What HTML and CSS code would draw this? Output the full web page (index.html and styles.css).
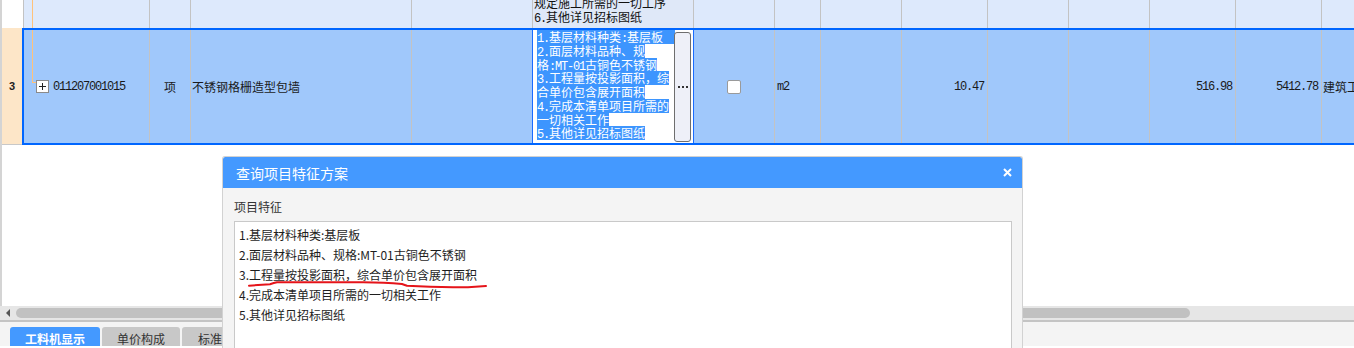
FILE: index.html
```html
<!DOCTYPE html>
<html lang="zh-CN">
<head>
<meta charset="utf-8">
<title>清单</title>
<link rel="stylesheet" href="styles.css">
</head>
<body>
<div class="grid">
  <div class="row prev">
    <div class="num"></div>
    <div class="cells">
      <div class="c c1"><span class="vline"></span></div>
      <div class="c c2"></div>
      <div class="c c3"></div>
      <div class="c c4"></div>
      <div class="c c5 feat-prev">
        <div class="pln">规定施工所需的一切工序</div>
        <div class="pln"><span class="h">6.</span>其他详见招标图纸</div>
      </div>
      <div class="c c6"></div>
      <div class="c c7"></div>
      <div class="c c8"></div>
      <div class="c c9"></div>
      <div class="c c10"></div>
      <div class="c c11"></div>
      <div class="c c12"></div>
      <div class="c c13"></div>
      <div class="c c14"></div>
    </div>
  </div>
  <div class="row cur">
    <div class="num">3</div>
    <div class="cells">
      <div class="c c1">
        <span class="elbow"></span>
        <span class="plus"><svg width="11" height="11" viewBox="0 0 11 11"><rect x="2" y="5" width="7" height="1" fill="#222"/><rect x="5" y="2" width="1" height="7" fill="#222"/></svg></span>
        <span class="mono code">011207001015</span>
      </div>
      <div class="c c2 center">项</div>
      <div class="c c3 txt">不锈钢格栅造型包墙</div>
      <div class="c c4 edit-left"></div>
      <div class="c c5 editor">
        <div class="sel">
          <div class="ln"><span><span class="h">1.</span>基层材料种类<span class="h">:</span>基层板<span class="h">  </span></span></div>
          <div class="ln"><span><span class="h">2.</span>面层材料品种、规</span></div>
          <div class="ln"><span>格<span class="h">:MT-01</span>古铜色不锈钢</span></div>
          <div class="ln"><span><span class="h">3.</span>工程量按投影面积，综</span></div>
          <div class="ln"><span>合单价包含展开面积</span></div>
          <div class="ln"><span><span class="h">4.</span>完成本清单项目所需的</span></div>
          <div class="ln"><span>一切相关工作</span></div>
          <div class="ln"><span><span class="h">5.</span>其他详见招标图纸</span></div>
        </div>
        <div class="dots"><svg width="10" height="2" viewBox="0 0 10 2"><rect x="0" y="0" width="2" height="2" fill="#333"/><rect x="4" y="0" width="2" height="2" fill="#333"/><rect x="8" y="0" width="2" height="2" fill="#333"/></svg></div>
      </div>
      <div class="c c6 center"><span class="chk"></span></div>
      <div class="c c7 left"><span class="mono">m2</span></div>
      <div class="c c8"></div>
      <div class="c c9 right"><span class="mono">10.47</span></div>
      <div class="c c10"></div>
      <div class="c c11"></div>
      <div class="c c12 right"><span class="mono">516.98</span></div>
      <div class="c c13 right"><span class="mono">5412.78</span></div>
      <div class="c c14 txt">建筑工程</div>
    </div>
  </div>
</div>
<div class="hscroll"><span class="arrow"></span><span class="thumb"></span></div>
<div class="tabs">
  <div class="tab active">工料机显示</div>
  <div class="tab">单价构成</div>
  <div class="tab">标准换算</div>
</div>

<div class="dialog">
  <div class="dtitle">
    <span>查询项目特征方案</span>
    <svg class="close" width="9" height="9" viewBox="0 0 9 9"><path d="M1 1 L8 8 M8 1 L1 8" stroke="#fff" stroke-width="2" fill="none"/></svg>
  </div>
  <div class="dbody">
    <div class="dlabel">项目特征</div>
    <div class="tarea">
      <div class="tl">1.基层材料种类:基层板</div>
      <div class="tl">2.面层材料品种、规格:MT-01古铜色不锈钢</div>
      <div class="tl">3.工程量按投影面积，综合单价包含展开面积</div>
      <div class="tl">4.完成本清单项目所需的一切相关工作</div>
      <div class="tl">5.其他详见招标图纸</div>
      <svg class="mark" width="250" height="14" viewBox="0 0 250 14"><path d="M4 8.7 L25 7.3 Q29 6 32 5.3 L118 5.3 Q140 5.5 157 7 Q160 8 162 8.7 L185 9.7 L208 10.3 L223 10.3 L241 9" stroke="#e5141a" stroke-width="2" fill="none" stroke-linecap="round"/></svg>
    </div>
  </div>
</div>
</body>
</html>
```

FILE: styles.css
```css
html, body {
  margin: 0;
  padding: 0;
}
body {
  width: 1354px;
  height: 348px;
  overflow: hidden;
  background: #ffffff;
  position: relative;
  font-family: "Noto Sans CJK SC", "Liberation Sans", sans-serif;
  font-size: 12px;
  color: #1a1a1a;
}

.grid {
  height: 306px;
  border-left: 2px solid #d4d4d4;
  box-sizing: border-box;
  overflow: hidden;
}
.row {
  display: flex;
}
.row.prev {
  height: 28px;
}
.row.prev .num {
  width: 22px;
  flex: none;
  box-sizing: border-box;
  border-right: 1px solid #c3c3c3;
  background: #ffffff;
}
.row.prev .cells {
  background: #dde9fc;
  height: 28px;
}
.row.cur {
  height: 117px;
}
.row.cur .num {
  width: 20px;
  flex: none;
  box-sizing: border-box;
  background: #fde6c8;
  border-bottom: 1px solid #c8c8c8;
  display: flex;
  align-items: center;
  justify-content: center;
  font-family: "Liberation Sans", sans-serif;
  font-weight: bold;
  font-size: 11px;
  color: #222;
}
.cells {
  display: flex;
  flex: none;
  width: 1400px;
  box-sizing: border-box;
}
.row.cur .cells {
  height: 117px;
  border: 2px solid #0066ff;
  border-right: none;
  background: #a0c8fb;
}

.c {
  flex: none;
  box-sizing: border-box;
  border-right: 1px solid #c3c3c3;
  height: 100%;
  display: flex;
  align-items: center;
  overflow: hidden;
  white-space: nowrap;
}
.c1 { width: 126px; }
.c2 { width: 41px; }
.c3 { width: 221px; }
.c4 { width: 121px; }
.c5 { width: 161px; }
.c6 { width: 81px; }
.c7 { width: 46px; }
.c8 { width: 81px; }
.c9 { width: 86px; }
.c10 { width: 81px; }
.c11 { width: 81px; }
.c12 { width: 86px; }
.c13 { width: 86px; }
.c14 { width: 120px; border-right: none; }

.center { justify-content: center; }
.right { justify-content: flex-end; padding-right: 3px; }
.left { padding-left: 2px; }
.txt { padding-left: 1px; }

.mono {
  font-family: "Liberation Mono", monospace;
  font-size: 12px;
  letter-spacing: -1.2px;
  color: #1a1a1a;
}
.h {
  font-family: "Liberation Mono", monospace;
  font-size: 12px;
  letter-spacing: -1.2px;
  white-space: pre;
}

/* tree */
.vline {
  width: 1px;
  height: 100%;
  background: #ffc27a;
  margin-left: 8px;
}
.elbow {
  align-self: flex-start;
  width: 4px;
  height: 57px;
  margin-left: 8px;
  box-sizing: border-box;
  border-left: 1px solid #ffc27a;
  border-bottom: 1px solid #ffc27a;
  margin-top: -4px;
  flex: none;
}
.plus {
  width: 13px;
  height: 13px;
  box-sizing: border-box;
  border: 1px solid #8a8a8a;
  background: #ffffff;
  display: flex;
  flex: none;
}
.code {
  margin-left: 4px;
}

/* previous row feature cell */
.feat-prev {
  flex-direction: column;
  justify-content: flex-end;
  align-items: flex-start;
  padding: 0 0 4px 1px;
  background: #dfe8f8;
}
.pln {
  height: 14px;
  line-height: 14px;
  color: #111;
  flex: none;
}

/* editor cell */
.edit-left {
  border-right-color: #1a6cff;
}
.editor {
  background: #ffffff;
  border-right-color: #1a6cff;
  padding-left: 4px;
  align-items: center;
}
.sel {
  width: 137px;
  flex: none;
  align-self: flex-start;
}
.ln {
  height: 13.75px;
}
.ln > span {
  display: inline-block;
  height: 13.75px;
  line-height: 13.75px;
  background: #3d95fe;
  color: #ffffff;
  white-space: nowrap;
  vertical-align: top;
}
.dots {
  width: 17px;
  height: 110px;
  box-sizing: border-box;
  border: 1px solid #6e6e6e;
  border-radius: 3px;
  background: #eef0f8;
  display: flex;
  align-items: center;
  justify-content: center;
  flex: none;
}
.chk {
  width: 14px;
  height: 14px;
  box-sizing: border-box;
  border: 1px solid #9a9a9a;
  border-radius: 2px;
  background: #ffffff;
}

/* scroll bar */
.hscroll {
  height: 14px;
  background: #e6e6e6;
  display: flex;
  align-items: center;
}
.arrow {
  width: 0;
  height: 0;
  border-top: 4px solid transparent;
  border-bottom: 4px solid transparent;
  border-right: 4px solid #555;
  margin-left: 6px;
}
.thumb {
  width: 1174px;
  height: 10px;
  border-radius: 5px;
  background: #c1c1c1;
  margin-left: 6px;
}

/* tabs */
.tabs {
  border-top: 2px solid #c4c4c4;
  background: #f4f4f4;
  height: 26px;
  padding: 5px 0 0 10px;
  display: flex;
  gap: 2px;
  box-sizing: border-box;
  overflow: hidden;
}
.tab {
  height: 24px;
  line-height: 24px;
  text-align: center;
  border-radius: 3px 3px 0 0;
  background: #c8c8c8;
  color: #333;
  font-size: 12px;
  width: 78px;
  flex: none;
}
.tab.active {
  width: 90px;
  background: #4499ff;
  color: #ffffff;
  font-weight: bold;
}
.tab:last-child {
  width: 80px;
}

/* dialog */
.dialog {
  position: absolute;
  left: 222px;
  top: 156px;
  width: 801px;
  height: 192px;
  overflow: hidden;
  box-sizing: border-box;
  border: 1px solid #d2d2d2;
  border-bottom: none;
  border-radius: 3px 3px 0 0;
  background: #f4f4f4;
  display: flex;
  flex-direction: column;
}
.dtitle {
  height: 31px;
  background: #4499ff;
  color: #ffffff;
  font-size: 14px;
  display: flex;
  align-items: center;
  justify-content: space-between;
  padding: 0 10px 0 13px;
  flex: none;
  border-radius: 2px 2px 0 0;
}
.close {
  display: block;
}
.dbody {
  padding: 12px 10px 0 11px;
  flex: 1;
  min-height: 0;
  display: flex;
  flex-direction: column;
}
.dlabel {
  font-size: 12px;
  line-height: 14px;
  color: #333;
  margin-bottom: 7px;
  flex: none;
}
.tarea {
  position: relative;
  flex: 1;
  box-sizing: border-box;
  border: 1px solid #c9c9c9;
  border-bottom: none;
  background: #ffffff;
  padding: 3px 4px;
}
.tl {
  font-size: 12px;
  line-height: 20px;
  color: #1e1e1e;
}
.mark {
  position: absolute;
  left: 10px;
  top: 55px;
}
```
